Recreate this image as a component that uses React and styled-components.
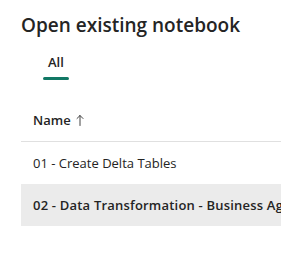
import React from 'react';
import styled, {createGlobalStyle} from 'styled-components';

const Global = createGlobalStyle`
	body {
		margin: 0;
		background: #ffffff;
		font-family: "Open Sans", "Noto Sans", sans-serif;
		color: #242424;
	}
`

const Page = styled.div`
	width: 281px;
	height: 255px;
	overflow: hidden;
	padding: 12px 0 0 21px;
	box-sizing: border-box;
`

const Title = styled.h1`
	margin: 0;
	font-size: 19px;
	font-weight: 600;
	line-height: 26px;
	white-space: nowrap;
	color: #242424;
`

const Tabs = styled.div`
	display: flex;
	margin: 12px 0 0 22px;
`

const Tab = styled.button`
	position: relative;
	border: 0;
	background: none;
	padding: 3px 5px 0;
	height: 36px;
	font-family: inherit;
	font-size: 13px;
	font-weight: ${p => (p.active ? 600 : 400)};
	color: #242424;
	display: flex;
	align-items: flex-start;
	&::after {
		content: '';
		display: ${p => (p.active ? 'block' : 'none')};
		position: absolute;
		left: 0;
		right: 0;
		bottom: 6px;
		height: 3px;
		border-radius: 2px;
		background: #117865;
	}
`

const Table = styled.div`
	margin-top: 13px;
	width: 300px;
`

const HeaderRow = styled.div`
	display: flex;
	align-items: center;
	height: 42px;
	padding: 0 12px;
	border-bottom: 1px solid #e0e0e0;
	font-size: 13px;
	font-weight: 600;
	gap: 5px;
	color: #242424;
`

const Row = styled.div`
	display: flex;
	align-items: center;
	height: 42px;
	padding: 0 11px 0 12px;
	font-size: 13px;
	white-space: nowrap;
	color: #242424;
	background: ${p => (p.selected ? '#ebebeb' : 'transparent')};
	font-weight: ${p => (p.selected ? 600 : 400)};
	letter-spacing: ${p => (p.selected ? '0.2px' : '0')};
`

const SortArrow = () => (
	<svg width="8" height="12" viewBox="0 0 8 12" fill="none" stroke="#424242" strokeWidth="1" strokeLinecap="round" strokeLinejoin="round">
		<path d="M4 1.5V11.5" />
		<path d="M1 4.5L4 1.5L7 4.5" />
	</svg>
)

const notebooks = [
	{name: '01 - Create Delta Tables'},
	{name: '02 - Data Transformation - Business Aggregates', selected: true},
];

const App = () => {
	return (
		<Page>
			<Global />
			<Title>Open existing notebook</Title>
			<Tabs>
				<Tab active>All</Tab>
			</Tabs>
			<Table>
				<HeaderRow>
					Name <SortArrow />
				</HeaderRow>
				{notebooks.map(n => (
					<Row key={n.name} selected={n.selected}>{n.name}</Row>
				))}
			</Table>
		</Page>
	)
}

export default App;
